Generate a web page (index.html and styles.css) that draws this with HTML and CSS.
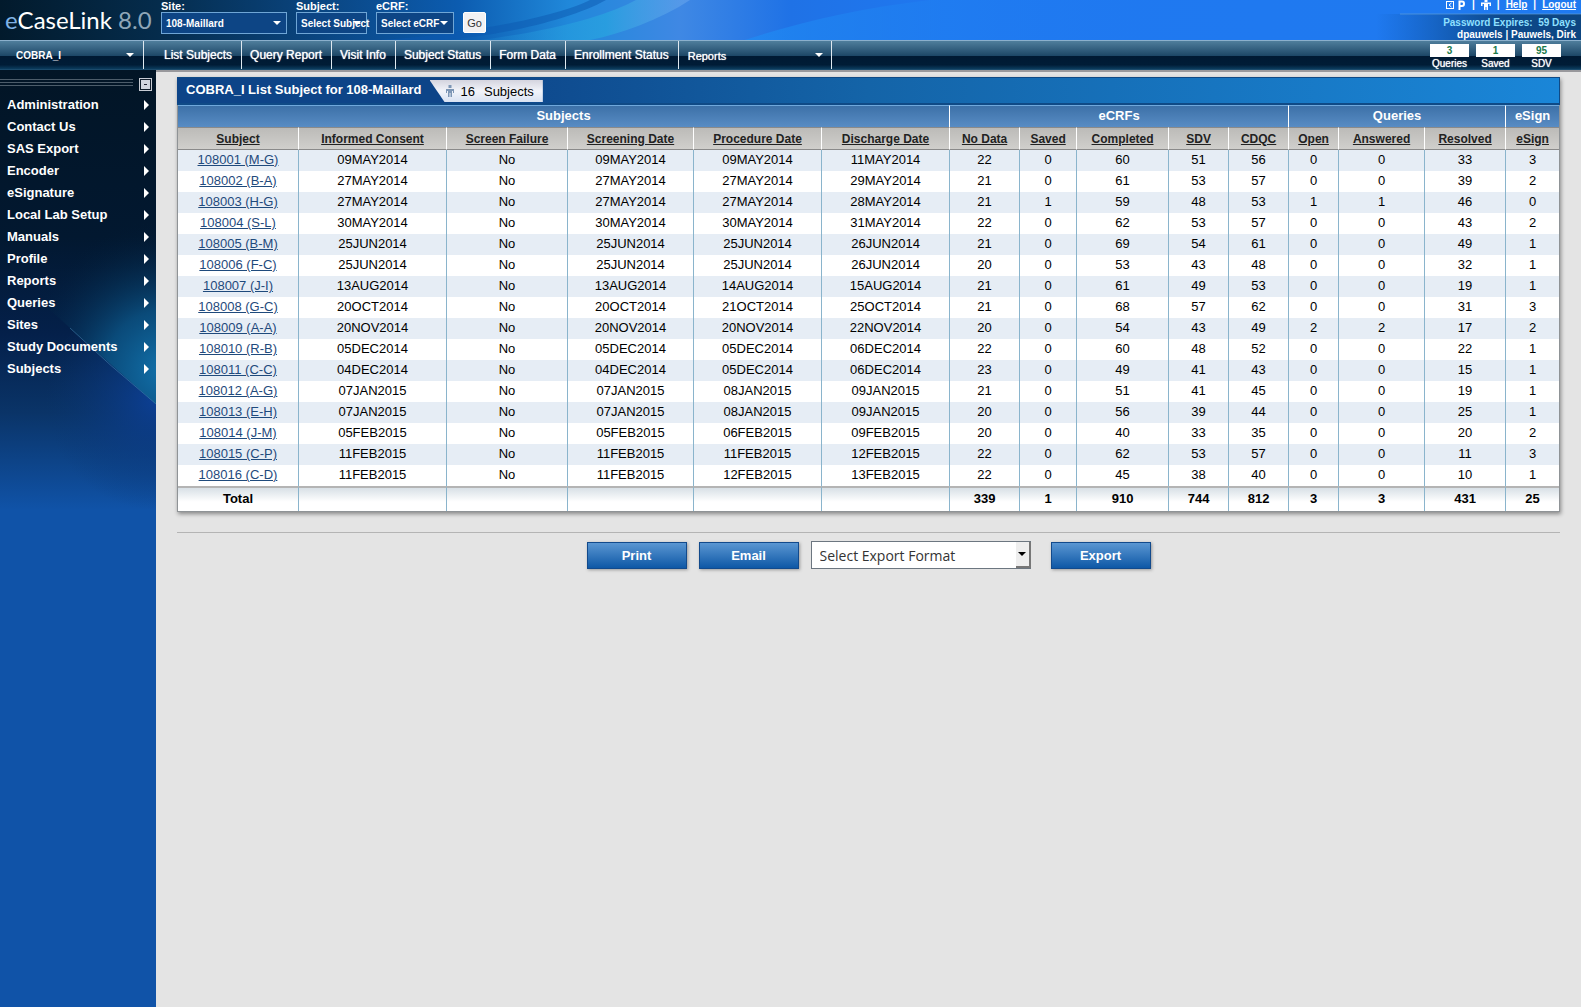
FILE: index.html
```html
<!DOCTYPE html>
<html lang="en">
<head>
<meta charset="utf-8">
<title>eCaseLink 8.0 - List Subjects</title>
<link rel="stylesheet" href="styles.css">
</head>
<body>
<header class="banner">
  <svg class="banner-art" viewBox="0 0 1581 40" preserveAspectRatio="none" aria-hidden="true">
    <defs>
      <linearGradient id="sky"><stop offset="0" stop-color="#021a2c"/><stop offset=".1" stop-color="#052c4c"/><stop offset=".2" stop-color="#0a4580"/><stop offset=".29" stop-color="#0c5cb0"/><stop offset=".36" stop-color="#2088da"/><stop offset=".43" stop-color="#3f88e4"/><stop offset=".5" stop-color="#1f72e6"/><stop offset=".6" stop-color="#1f78f0"/><stop offset="1" stop-color="#1f7af0"/></linearGradient>
      <linearGradient id="ray"><stop offset="0" stop-color="#28a0e0" stop-opacity=".1"/><stop offset=".6" stop-color="#28a4e0" stop-opacity=".75"/><stop offset="1" stop-color="#70a8ee" stop-opacity=".5"/></linearGradient>
      <linearGradient id="beam"><stop offset="0" stop-color="#1f8cf4" stop-opacity=".7"/><stop offset="1" stop-color="#1f7af0" stop-opacity="0"/></linearGradient>
      <linearGradient id="fade"><stop offset="0" stop-color="#0c50a0" stop-opacity="0"/><stop offset=".6" stop-color="#0d4a8c"/><stop offset="1" stop-color="#0d4580"/></linearGradient>
    </defs>
    <rect width="1581" height="40" fill="url(#sky)"/>
    <path d="M480 40C560 30 610 14 636 0H690C660 20 620 34 590 40Z" fill="url(#ray)"/>
    <path d="M380 40C470 34 560 16 590 0H606C570 20 500 36 440 40Z" fill="#0c58b0" opacity=".5"/>
    <path d="M745 40C800 22 860 8 930 0H1150V40Z" fill="url(#beam)"/>
    <rect x="1376" y="14" width="205" height="26" fill="url(#fade)"/>
    <path d="M1400 14H1581" stroke="#5e9fda" opacity=".7"/>
  </svg>
  <div class="logo"><span class="logo-e">e</span>CaseLink <span class="logo-v">8.0</span></div>
  <form class="pickers">
    <div class="picker site"><label for="site">Site:</label><span class="drop"><select id="site"><option>108-Maillard</option></select><svg viewBox="0 0 8 4"><path d="M0 0H8L4 4Z"/></svg></span></div>
    <div class="picker subject"><label for="subject">Subject:</label><span class="drop"><select id="subject"><option>Select Subject</option></select><svg viewBox="0 0 8 4"><path d="M0 0H8L4 4Z"/></svg></span></div>
    <div class="picker ecrf"><label for="ecrf">eCRF:</label><span class="drop"><select id="ecrf"><option>Select eCRF</option></select><svg viewBox="0 0 8 4"><path d="M0 0H8L4 4Z"/></svg></span></div>
    <button class="go" type="button">Go</button>
  </form>
  <div class="account">
    <div class="tools">
      <svg class="ico-p" viewBox="0 0 20 10"><rect x=".5" y="1.500" width="7" height="7" fill="none" stroke="#fff"/><path d="M5.500 3L3 5L5.500 7" fill="none" stroke="#fff"/><path d="M13.500 10V1.500H16Q18 1.500 18 3.700T16 6H13.500" fill="none" stroke="#fff" stroke-width="2"/></svg>
      <span>|</span>
      <svg class="ico-man" viewBox="0 0 10 10"><path d="M3.500 0H6.500V2H3.500ZM0 2.500H10V6H8.500V4H7V10H5.500V7H4.500V10H3V4H1.500V6H0Z" fill="#fff"/></svg>
      <span>|</span><a href="#help">Help</a><span>|</span><a href="#logout">Logout</a>
    </div>
    <div class="expires">Password Expires:&nbsp; 59 Days</div>
    <div class="user">dpauwels | Pauwels, Dirk</div>
  </div>
</header>
<nav class="topnav">
  <span class="drop study"><select aria-label="Study"><option>COBRA_I</option></select><svg viewBox="0 0 8 4"><path d="M0 0H8L4 4Z"/></svg></span>
  <a class="first" href="#list">List Subjects</a><a href="#query">Query Report</a><a href="#visit">Visit Info</a><a href="#status">Subject Status</a><a href="#form">Form Data</a><a href="#enroll">Enrollment Status</a>
  <span class="drop reports"><select aria-label="Reports"><option>Reports</option></select><svg viewBox="0 0 8 4"><path d="M0 0H8L4 4Z"/></svg></span>
  <div class="counts">
    <div><b>3</b><span>Queries</span></div><div><b>1</b><span>Saved</span></div><div><b>95</b><span>SDV</span></div>
  </div>
</nav>
<div class="body">
  <aside class="side">
    <svg class="side-art" viewBox="0 0 156 440" preserveAspectRatio="none" aria-hidden="true">
      <defs>
        <linearGradient id="deep" x2="0" y2="1"><stop offset="0" stop-color="#021526"/><stop offset=".38" stop-color="#021830"/><stop offset=".6" stop-color="#04204a"/><stop offset=".78" stop-color="#0a3468"/><stop offset="1" stop-color="#1053a8"/></linearGradient>
        <radialGradient id="glow" gradientUnits="userSpaceOnUse" cx="165" cy="300" r="150"><stop offset="0" stop-color="#1272ac"/><stop offset=".4" stop-color="#0b5282" stop-opacity=".85"/><stop offset="1" stop-color="#021830" stop-opacity="0"/></radialGradient>
        <radialGradient id="glow2" gradientUnits="userSpaceOnUse" cx="156" cy="330" r="110"><stop offset="0" stop-color="#0c3f94"/><stop offset="1" stop-color="#0a3570" stop-opacity="0"/></radialGradient>
      </defs>
      <rect width="156" height="440" fill="url(#deep)"/>
      <path d="M0 180L50 240Q100 285 156 334V440H0Z" fill="url(#glow2)"/>
      <path d="M0 130H156V334Q100 285 50 240L0 180Z" fill="url(#glow)"/>
      <path d="M70 258Q110 296 156 334" fill="none" stroke="#4a90bc" opacity=".5"/>
    </svg>
    <div class="side-top"><i class="grip"></i><button class="collapse" aria-label="Collapse menu"></button></div>
    <ul class="menu">
      <li><a href="#m1">Administration</a></li><li><a href="#m2">Contact Us</a></li><li><a href="#m3">SAS Export</a></li><li><a href="#m4">Encoder</a></li><li><a href="#m5">eSignature</a></li><li><a href="#m6">Local Lab Setup</a></li><li><a href="#m7">Manuals</a></li><li><a href="#m8">Profile</a></li><li><a href="#m9">Reports</a></li><li><a href="#m10">Queries</a></li><li><a href="#m11">Sites</a></li><li><a href="#m12">Study Documents</a></li><li><a href="#m13">Subjects</a></li>
    </ul>
  </aside>
  <main>
    <section class="panel">
      <div class="title"><h1>COBRA_I List Subject for 108-Maillard</h1>
        <div class="tab"><svg viewBox="0 0 10 12"><path d="M3.500 0H6.500V3H3.500ZM1 4H9V8H8V6H7V12H5.500V8H4.500V12H3V6H2V8H1Z" fill="#7d96b5"/></svg><span>16</span><span>Subjects</span></div>
      </div>
      <table>
        <colgroup><col class="w-subject"><col class="w-consent"><col class="w-fail"><col class="w-screen"><col class="w-date"><col class="w-date"><col class="w-nodata"><col class="w-saved"><col class="w-comp"><col class="w-sdv"><col class="w-sdv"><col class="w-open"><col class="w-ans"><col class="w-res"><col class="w-esign"></colgroup>
        <thead>
          <tr class="groups"><th colspan="6">Subjects</th><th colspan="5">eCRFs</th><th colspan="3">Queries</th><th>eSign</th></tr>
          <tr class="heads"><th><a href="#s">Subject</a></th><th><a href="#s">Informed Consent</a></th><th><a href="#s">Screen Failure</a></th><th><a href="#s">Screening Date</a></th><th><a href="#s">Procedure Date</a></th><th><a href="#s">Discharge Date</a></th><th><a href="#s">No Data</a></th><th><a href="#s">Saved</a></th><th><a href="#s">Completed</a></th><th><a href="#s">SDV</a></th><th><a href="#s">CDQC</a></th><th><a href="#s">Open</a></th><th><a href="#s">Answered</a></th><th><a href="#s">Resolved</a></th><th><a href="#s">eSign</a></th></tr>
        </thead>
        <tbody>
          <tr><td><a href="#1">108001 (M-G)</a></td><td>09MAY2014</td><td>No</td><td>09MAY2014</td><td>09MAY2014</td><td>11MAY2014</td><td>22</td><td>0</td><td>60</td><td>51</td><td>56</td><td>0</td><td>0</td><td>33</td><td>3</td></tr>
          <tr><td><a href="#2">108002 (B-A)</a></td><td>27MAY2014</td><td>No</td><td>27MAY2014</td><td>27MAY2014</td><td>29MAY2014</td><td>21</td><td>0</td><td>61</td><td>53</td><td>57</td><td>0</td><td>0</td><td>39</td><td>2</td></tr>
          <tr><td><a href="#3">108003 (H-G)</a></td><td>27MAY2014</td><td>No</td><td>27MAY2014</td><td>27MAY2014</td><td>28MAY2014</td><td>21</td><td>1</td><td>59</td><td>48</td><td>53</td><td>1</td><td>1</td><td>46</td><td>0</td></tr>
          <tr><td><a href="#4">108004 (S-L)</a></td><td>30MAY2014</td><td>No</td><td>30MAY2014</td><td>30MAY2014</td><td>31MAY2014</td><td>22</td><td>0</td><td>62</td><td>53</td><td>57</td><td>0</td><td>0</td><td>43</td><td>2</td></tr>
          <tr><td><a href="#5">108005 (B-M)</a></td><td>25JUN2014</td><td>No</td><td>25JUN2014</td><td>25JUN2014</td><td>26JUN2014</td><td>21</td><td>0</td><td>69</td><td>54</td><td>61</td><td>0</td><td>0</td><td>49</td><td>1</td></tr>
          <tr><td><a href="#6">108006 (F-C)</a></td><td>25JUN2014</td><td>No</td><td>25JUN2014</td><td>25JUN2014</td><td>26JUN2014</td><td>20</td><td>0</td><td>53</td><td>43</td><td>48</td><td>0</td><td>0</td><td>32</td><td>1</td></tr>
          <tr><td><a href="#7">108007 (J-I)</a></td><td>13AUG2014</td><td>No</td><td>13AUG2014</td><td>14AUG2014</td><td>15AUG2014</td><td>21</td><td>0</td><td>61</td><td>49</td><td>53</td><td>0</td><td>0</td><td>19</td><td>1</td></tr>
          <tr><td><a href="#8">108008 (G-C)</a></td><td>20OCT2014</td><td>No</td><td>20OCT2014</td><td>21OCT2014</td><td>25OCT2014</td><td>21</td><td>0</td><td>68</td><td>57</td><td>62</td><td>0</td><td>0</td><td>31</td><td>3</td></tr>
          <tr><td><a href="#9">108009 (A-A)</a></td><td>20NOV2014</td><td>No</td><td>20NOV2014</td><td>20NOV2014</td><td>22NOV2014</td><td>20</td><td>0</td><td>54</td><td>43</td><td>49</td><td>2</td><td>2</td><td>17</td><td>2</td></tr>
          <tr><td><a href="#10">108010 (R-B)</a></td><td>05DEC2014</td><td>No</td><td>05DEC2014</td><td>05DEC2014</td><td>06DEC2014</td><td>22</td><td>0</td><td>60</td><td>48</td><td>52</td><td>0</td><td>0</td><td>22</td><td>1</td></tr>
          <tr><td><a href="#11">108011 (C-C)</a></td><td>04DEC2014</td><td>No</td><td>04DEC2014</td><td>05DEC2014</td><td>06DEC2014</td><td>23</td><td>0</td><td>49</td><td>41</td><td>43</td><td>0</td><td>0</td><td>15</td><td>1</td></tr>
          <tr><td><a href="#12">108012 (A-G)</a></td><td>07JAN2015</td><td>No</td><td>07JAN2015</td><td>08JAN2015</td><td>09JAN2015</td><td>21</td><td>0</td><td>51</td><td>41</td><td>45</td><td>0</td><td>0</td><td>19</td><td>1</td></tr>
          <tr><td><a href="#13">108013 (E-H)</a></td><td>07JAN2015</td><td>No</td><td>07JAN2015</td><td>08JAN2015</td><td>09JAN2015</td><td>20</td><td>0</td><td>56</td><td>39</td><td>44</td><td>0</td><td>0</td><td>25</td><td>1</td></tr>
          <tr><td><a href="#14">108014 (J-M)</a></td><td>05FEB2015</td><td>No</td><td>05FEB2015</td><td>06FEB2015</td><td>09FEB2015</td><td>20</td><td>0</td><td>40</td><td>33</td><td>35</td><td>0</td><td>0</td><td>20</td><td>2</td></tr>
          <tr><td><a href="#15">108015 (C-P)</a></td><td>11FEB2015</td><td>No</td><td>11FEB2015</td><td>11FEB2015</td><td>12FEB2015</td><td>22</td><td>0</td><td>62</td><td>53</td><td>57</td><td>0</td><td>0</td><td>11</td><td>3</td></tr>
          <tr><td><a href="#16">108016 (C-D)</a></td><td>11FEB2015</td><td>No</td><td>11FEB2015</td><td>12FEB2015</td><td>13FEB2015</td><td>22</td><td>0</td><td>45</td><td>38</td><td>40</td><td>0</td><td>0</td><td>10</td><td>1</td></tr>
        </tbody>
        <tfoot><tr><td>Total</td><td></td><td></td><td></td><td></td><td></td><td>339</td><td>1</td><td>910</td><td>744</td><td>812</td><td>3</td><td>3</td><td>431</td><td>25</td></tr></tfoot>
      </table>
    </section>
    <div class="actions">
      <button type="button">Print</button><button type="button">Email</button>
      <span class="export"><select aria-label="Export format"><option>Select Export Format</option></select><i><svg viewBox="0 0 8 4"><path d="M0 0H8L4 4Z"/></svg></i></span>
      <button type="button">Export</button>
    </div>
  </main>
</div>
</body>
</html>
```
FILE: styles.css
```css
* { box-sizing: border-box; }
body {
  margin: 0;
  min-height: 100vh;
  display: flex;
  flex-direction: column;
  background: #e4e4e4;
  font-family: "Liberation Sans", Arial, sans-serif;
  font-size: 13px;
  color: #000;
}
a { color: inherit; }
select, button { font-family: inherit; margin: 0; }
select { appearance: none; border-radius: 0; outline: 0; }

.banner {
  position: relative;
  display: flex;
  height: 40px;
  color: #fff;
  background: #1f78f0;
}
.banner-art { position: absolute; inset: 0; width: 100%; height: 100%; }
.logo {
  position: relative;
  width: 161px;
  padding-left: 5px;
  font-family: Lato, sans-serif;
  font-size: 24px;
  line-height: 40px;
  white-space: nowrap;
}
.logo-e { color: #7fb2e6; }
.logo-v { color: #8fa6b8; }
.pickers { position: relative; display: flex; align-items: flex-start; font-size: 11px; font-weight: bold; }
.picker { display: flex; flex-direction: column; margin-right: 9px; }
.picker label { line-height: 12px; }
.site { width: 126px; }
.subject { width: 71px; }
.ecrf { width: 78px; }
.drop { position: relative; display: flex; align-items: center; }
.drop svg { position: absolute; right: 5px; width: 8px; height: 4px; fill: #fff; pointer-events: none; }
.drop select { width: 100%; border: 0; background: transparent; color: #fff; font-weight: bold; font-size: 10px; }
.picker .drop { height: 22px; background: #0d4585; border: 1px solid #6fa6d6; }
.picker select { height: 20px; padding: 0 0 0 4px; }
/* the subject caption is longer than its box and runs over the edge */
.subject select { flex: none; width: 80px; }
.go {
  width: 23px;
  height: 21px;
  margin-top: 12px;
  padding: 0;
  border: 1px solid #fff;
  border-radius: 2px;
  background: #f1f1f3;
  font-size: 11px;
  color: #333;
}
.account { position: relative; margin-left: auto; padding-right: 5px; text-align: right; font-size: 10px; font-weight: bold; }
.tools { display: flex; justify-content: flex-end; align-items: center; gap: 6px; height: 10px; margin-bottom: 7px; line-height: 10px; }
.ico-p { width: 20px; height: 10px; }
.ico-man { width: 10px; height: 10px; }
.expires { line-height: 12px; color: #8fe0ff; }
.user { line-height: 11px; }

.topnav {
  display: flex;
  height: 30px;
  border-top: 1px solid #8bb0cc;
  border-bottom: 1px solid #1a4a6c;
  background: linear-gradient(#4f7e9c, #1c4666 54%, #001a34 55%, #001c36 85%, #0b3c5e);
  color: #fff;
}
.topnav a {
  padding: 0 9px 0 8px;
  border-right: 1px solid #dfe9f0;
  font-size: 12px;
  line-height: 28px;
  text-decoration: none;
  text-shadow: 0 0 1px #fff;
}
.topnav .first { padding-left: 20px; }
.topnav select { height: 28px; }
.study { width: 144px; border-right: 1px solid #dfe9f0; }
.study select { padding-left: 16px; }
.study svg { right: 9px; }
.reports { width: 153px; border-right: 1px solid #dfe9f0; }
.reports select { padding: 2px 0 0 9px; font-weight: normal; font-size: 11px; text-shadow: 0 0 1px #fff; }
.reports svg { right: 8px; }
.counts { display: flex; gap: 7px; margin-left: auto; padding: 3px 20px 0 0; text-align: center; }
.counts div { display: flex; flex-direction: column; width: 39px; }
.counts b { height: 13px; background: #fff; color: #1a7a4a; font-size: 10px; line-height: 14px; }
.counts span { font-size: 10px; line-height: 14px; text-shadow: 0 0 1px #fff; }

.body { flex: 1; display: flex; }
.side { position: relative; width: 156px; flex: none; background: #1053a8; color: #fff; }
.side-art { position: absolute; top: 0; left: 0; width: 100%; height: 440px; }
.side-top { position: relative; display: flex; justify-content: space-between; padding: 8px 4px 0 0; }
.grip { width: 133px; height: 7px; margin-top: 1px; border-top: 1px solid #4c5c6a; border-bottom: 1px solid #4c5c6a; background: linear-gradient(#4c5c6a, #4c5c6a) 0 2px / 100% 1px no-repeat; }
.collapse { width: 13px; height: 13px; padding: 0; border: 1px solid #c8ccd4; background: linear-gradient(#223, #223) center / 3px 1px no-repeat, #d2d5df; box-shadow: inset 0 0 0 1px #111c2a; }
.menu { position: relative; list-style: none; margin: 2px 0 0; padding: 0; }
.menu a {
  display: flex;
  justify-content: space-between;
  align-items: center;
  height: 22px;
  padding: 0 7px;
  font-weight: bold;
  font-size: 13px;
  text-decoration: none;
}
.menu a::after { content: ""; margin-top: 2px; border: solid transparent; border-width: 5px 0 5px 5px; border-left-color: #fff; }

main { flex: 1; min-width: 0; padding: 5px 21px 0; border-top: 2px solid #98989c; }
.panel { box-shadow: 1px 2px 4px #888; }
.title {
  display: flex;
  height: 28px;
  padding-left: 9px;
  border: solid #0f4a86;
  border-width: 1px 1px 2px 0;
  background: linear-gradient(90deg, #0d4488 20%, #1464a8 50%, #1a86d8);
  color: #fff;
}
h1 { margin: 0; font-size: 13px; line-height: 24px; }
.tab {
  display: flex;
  align-items: center;
  gap: 6px;
  height: 22px;
  margin: 2px 0 0 8px;
  padding: 0 9px 0 15px;
  background: linear-gradient(#d4d4de, #f2f4fa 50%, #d8e2f2);
  clip-path: polygon(0 0, 100% 0, 100% 100%, 15px 100%);
  color: #000;
}
.tab svg { width: 10px; height: 12px; }
.tab span + span { margin-left: 3px; }

table { width: 100%; table-layout: fixed; border-collapse: separate; border-spacing: 0; border: 1px solid #8f9396; border-top: 0; background: #fff; }
.w-subject { width: 121px; }
.w-consent { width: 148px; }
.w-fail { width: 121px; }
.w-screen { width: 126px; }
.w-date { width: 128px; }
.w-nodata { width: 70px; }
.w-saved { width: 57px; }
.w-comp { width: 92px; }
.w-sdv { width: 60px; }
.w-open { width: 50px; }
.w-ans { width: 86px; }
.w-res { width: 81px; }
.w-esign { width: 53px; }
th, td { padding: 0; text-align: center; white-space: nowrap; }
.groups th { height: 22px; padding-bottom: 2px; border-top: 1px solid #6fa8dc; border-right: 1px solid #fff; background: linear-gradient(#3d71a8, #588cc4); color: #fff; font-size: 13px; }
.heads th { height: 23px; border-top: 1px solid #8a8a8a; border-bottom: 1px solid #8a8a8a; border-right: 1px solid #fff; background: linear-gradient(#bcbbb8, #d0cfcc); font-size: 12px; color: #222; }
tbody td { height: 21px; line-height: 19px; padding-bottom: 2px; border-right: 1px solid #8ab4cc; }
tbody a { color: #1f4a7c; }
tbody tr:nth-child(odd) { background: #e6edf5; }
tfoot td { height: 25px; padding-bottom: 2px; border-top: 2px solid #b4b4b4; border-right: 1px solid #8ab4cc; background: linear-gradient(#d8e0e6, #fff 60%); font-weight: bold; }
tr > :last-child { border-right: 0; }

.actions {
  display: flex;
  justify-content: center;
  gap: 12px;
  margin-top: 20px;
  padding: 8px 0 0 0;
  border-top: 1px solid #b4b4b4;
}
.actions button {
  width: 100px;
  height: 27px;
  margin-top: 1px;
  border: 1px solid #124a8c;
  background: linear-gradient(#5a96d2, #0e58a6);
  box-shadow: 1px 1px 3px #999;
  color: #fff;
  font-weight: bold;
  font-size: 13px;
}
.export { position: relative; display: flex; width: 220px; margin-right: 8px; }
.export select { width: 100%; height: 28px; padding: 0 8px; border: 1px solid #6c7680; background: #fff; font-family: "Open Sans", sans-serif; font-size: 14px; color: #333; }
.export i {
  position: absolute;
  right: 0;
  top: 1px;
  display: flex;
  align-items: center;
  justify-content: center;
  width: 15px;
  height: 26px;
  background: #eee;
  border: solid #777;
  border-width: 0 2px 2px 0;
  pointer-events: none;
}
.export svg { width: 8px; height: 4px; }
```
